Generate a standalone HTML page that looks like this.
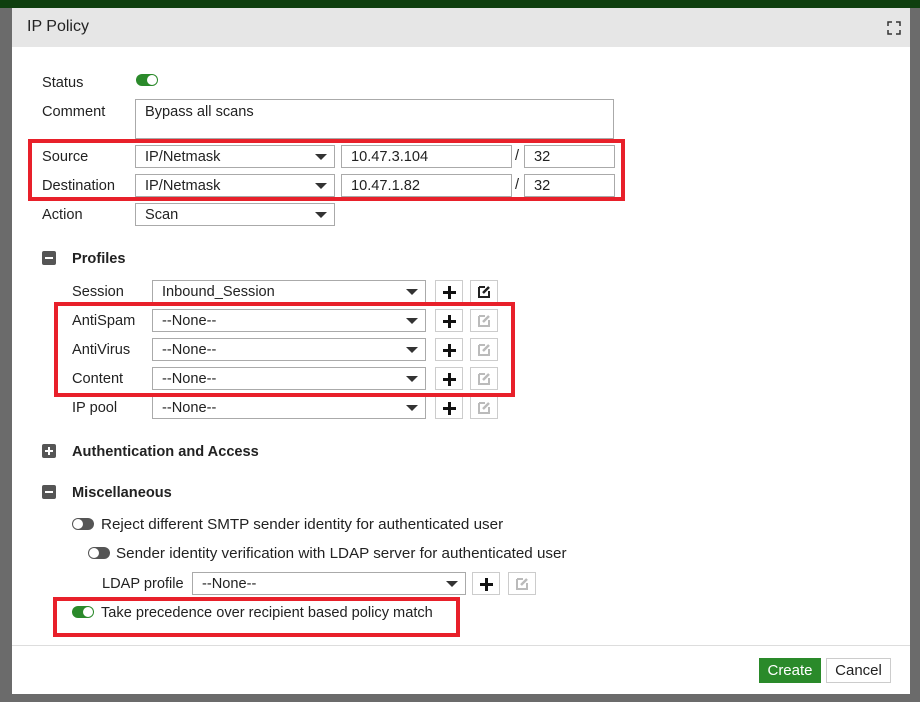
<!DOCTYPE html>
<html><head><meta charset="utf-8"><style>
*{box-sizing:border-box;margin:0;padding:0}
body{width:920px;height:702px;overflow:hidden;background:#6b6b6b;font-family:"Liberation Sans",sans-serif;font-size:14.6px;color:#222;position:relative}
.a{position:absolute}
.lbl{position:absolute;line-height:16px}
.sel{position:absolute;border:1px solid #aaa;background:#fff;height:23px;padding-left:9px;line-height:22px}
.sel:after{content:"";position:absolute;right:7px;top:8px;border-left:6px solid transparent;border-right:6px solid transparent;border-top:6px solid #333}
.inp{position:absolute;border:1px solid #aaa;background:#fff;height:23px;padding-left:9px;line-height:22px}
.btn{position:absolute;width:28px;height:23px;border:1px solid #ccc;background:#fff}
.plus:before{content:"";position:absolute;left:7px;top:10px;width:13px;height:2.5px;background:#111}
.plus:after{content:"";position:absolute;left:12.3px;top:4.5px;width:2.5px;height:13px;background:#111}
.red{position:absolute;border:4px solid #e8202a}
.tog{position:absolute;width:22px;height:12px;border-radius:6px}
.on{background:#2b8a2b}.on:after{content:"";position:absolute;right:1px;top:1px;width:10px;height:10px;border-radius:5px;background:#fff}
.off{background:#555}.off:after{content:"";position:absolute;left:1px;top:1px;width:10px;height:10px;border-radius:5px;background:#fff}
.sq{position:absolute;width:14px;height:14px;background:#555;border-radius:2px}
.sq:before{content:"";position:absolute;left:3px;top:6px;width:8px;height:2px;background:#fff}
.sq.p:after{content:"";position:absolute;left:6px;top:3px;width:2px;height:8px;background:#fff}
b{font-weight:bold}
</style></head><body>
<div class="a" style="left:0;top:0;width:920px;height:8px;background:#0f3f0f"></div>
<div class="a" style="left:12px;top:8px;width:898px;height:686px;background:#fff"></div>
<div class="a" style="left:12px;top:8px;width:898px;height:39px;background:#e6e6e6"></div>
<div class="lbl" style="left:27px;top:19px;font-size:16px">IP Policy</div>
<svg class="a" style="left:887px;top:21px" width="14" height="14" viewBox="0 0 14 14" fill="none" stroke="#333" stroke-width="1.5"><path d="M1 5V1H5M9 1H13V5M13 9V13H9M5 13H1V9"/></svg>

<div class="lbl" style="left:42px;top:75px">Status</div>
<div class="tog on" style="left:136px;top:74px"></div>
<div class="lbl" style="left:42px;top:104px">Comment</div>
<div class="inp" style="left:135px;top:99px;width:479px;height:40px;line-height:24px">Bypass all scans</div>

<div class="lbl" style="left:42px;top:149px">Source</div>
<div class="sel" style="left:135px;top:145px;width:200px">IP/Netmask</div>
<div class="inp" style="left:341px;top:145px;width:171px">10.47.3.104</div>
<div class="lbl" style="left:515px;top:148px">/</div>
<div class="inp" style="left:524px;top:145px;width:91px">32</div>
<div class="lbl" style="left:42px;top:178px">Destination</div>
<div class="sel" style="left:135px;top:174px;width:200px">IP/Netmask</div>
<div class="inp" style="left:341px;top:174px;width:171px">10.47.1.82</div>
<div class="lbl" style="left:515px;top:177px">/</div>
<div class="inp" style="left:524px;top:174px;width:91px">32</div>
<div class="red" style="left:28px;top:139px;width:597px;height:62px"></div>
<div class="lbl" style="left:42px;top:207px">Action</div>
<div class="sel" style="left:135px;top:203px;width:200px">Scan</div>

<div class="sq" style="left:42px;top:251px"></div><div class="lbl" style="left:72px;top:251px"><b>Profiles</b></div>

<div class="lbl" style="left:72px;top:284px">Session</div>
<div class="sel" style="left:152px;top:280px;width:274px">Inbound_Session</div>
<div class="btn plus" style="left:435px;top:280px"></div>
<div class="btn" style="left:470px;top:280px"><svg class="a" style="left:7px;top:4px" width="13" height="13" viewBox="0 0 13 13"><path d="M1 2H7M1 2V12H11V6" stroke="#222" stroke-width="2" fill="none"/><path d="M5 8L11 2" stroke="#222" stroke-width="2.5"/></svg></div>

<div class="lbl" style="left:72px;top:313px">AntiSpam</div>
<div class="sel" style="left:152px;top:309px;width:274px">--None--</div>
<div class="btn plus" style="left:435px;top:309px"></div>
<div class="btn" style="left:470px;top:309px"><svg class="a" style="left:7px;top:4px" width="13" height="13" viewBox="0 0 13 13"><path d="M1 2H7M1 2V12H11V6" stroke="#bbb" stroke-width="2" fill="none"/><path d="M5 8L11 2" stroke="#bbb" stroke-width="2.5"/></svg></div>
<div class="lbl" style="left:72px;top:342px">AntiVirus</div>
<div class="sel" style="left:152px;top:338px;width:274px">--None--</div>
<div class="btn plus" style="left:435px;top:338px"></div>
<div class="btn" style="left:470px;top:338px"><svg class="a" style="left:7px;top:4px" width="13" height="13" viewBox="0 0 13 13"><path d="M1 2H7M1 2V12H11V6" stroke="#bbb" stroke-width="2" fill="none"/><path d="M5 8L11 2" stroke="#bbb" stroke-width="2.5"/></svg></div>
<div class="lbl" style="left:72px;top:371px">Content</div>
<div class="sel" style="left:152px;top:367px;width:274px">--None--</div>
<div class="btn plus" style="left:435px;top:367px"></div>
<div class="btn" style="left:470px;top:367px"><svg class="a" style="left:7px;top:4px" width="13" height="13" viewBox="0 0 13 13"><path d="M1 2H7M1 2V12H11V6" stroke="#bbb" stroke-width="2" fill="none"/><path d="M5 8L11 2" stroke="#bbb" stroke-width="2.5"/></svg></div>
<div class="lbl" style="left:72px;top:400px">IP pool</div>
<div class="sel" style="left:152px;top:396px;width:274px">--None--</div>
<div class="btn plus" style="left:435px;top:396px"></div>
<div class="btn" style="left:470px;top:396px"><svg class="a" style="left:7px;top:4px" width="13" height="13" viewBox="0 0 13 13"><path d="M1 2H7M1 2V12H11V6" stroke="#bbb" stroke-width="2" fill="none"/><path d="M5 8L11 2" stroke="#bbb" stroke-width="2.5"/></svg></div>
<div class="red" style="left:54px;top:302px;width:461px;height:95px"></div>

<div class="sq p" style="left:42px;top:444px"></div><div class="lbl" style="left:72px;top:444px"><b>Authentication and Access</b></div>
<div class="sq" style="left:42px;top:485px"></div><div class="lbl" style="left:72px;top:485px"><b>Miscellaneous</b></div>

<div class="tog off" style="left:72px;top:518px"></div>
<div class="lbl" style="left:101px;top:517px;font-size:15.2px">Reject different SMTP sender identity for authenticated user</div>
<div class="tog off" style="left:88px;top:547px"></div>
<div class="lbl" style="left:116px;top:546px;font-size:15.2px">Sender identity verification with LDAP server for authenticated user</div>
<div class="lbl" style="left:102px;top:576px">LDAP profile</div>
<div class="sel" style="left:192px;top:572px;width:274px">--None--</div>
<div class="btn plus" style="left:472px;top:572px"></div>
<div class="btn" style="left:508px;top:572px"><svg class="a" style="left:7px;top:4px" width="13" height="13" viewBox="0 0 13 13"><path d="M1 2H7M1 2V12H11V6" stroke="#bbb" stroke-width="2" fill="none"/><path d="M5 8L11 2" stroke="#bbb" stroke-width="2.5"/></svg></div>
<div class="tog on" style="left:72px;top:606px"></div>
<div class="lbl" style="left:101px;top:605px">Take precedence over recipient based policy match</div>
<div class="red" style="left:53px;top:597px;width:407px;height:40px"></div>

<div class="a" style="left:12px;top:645px;width:898px;height:1px;background:#ddd"></div>
<div class="a" style="left:759px;top:658px;width:62px;height:25px;background:#2a8a2a;color:#fff;text-align:center;line-height:25px;font-size:15px">Create</div>
<div class="a" style="left:826px;top:658px;width:65px;height:25px;border:1px solid #ccc;background:#fff;text-align:center;line-height:23px;font-size:15px">Cancel</div>
</body></html>
